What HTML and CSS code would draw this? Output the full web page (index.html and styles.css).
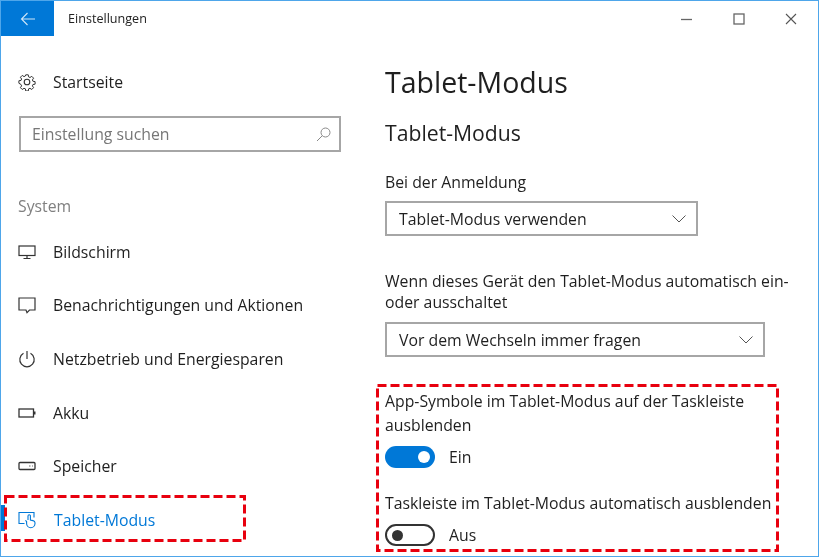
FILE: index.html
```html
<!DOCTYPE html>
<html lang="de">
  <head>
    <meta charset="UTF-8" />
    <title>Einstellungen</title>
    <link rel="stylesheet" href="styles.css">
  </head>
  <body>
    <div class="window">
      <header class="titlebar">
        <div class="back-btn">
          <svg width="16" height="14" viewBox="0 0 16 14"><path d="M15 7H1.500M7.500 1 1.500 7l6 6" fill="none" stroke="#cfe6f8" stroke-width="1.100"/></svg>
        </div>
        <div class="title">Einstellungen</div>
        <div class="win-controls">
          <svg width="12" height="12" viewBox="0 0 12 12"><path d="M0 6.500h11" stroke="#666" stroke-width="1.300"/></svg>
          <svg width="12" height="12" viewBox="0 0 12 12"><rect x="1" y="1" width="10" height="10" fill="none" stroke="#666" stroke-width="1.300"/></svg>
          <svg width="12" height="12" viewBox="0 0 12 12"><path d="M1 1l10 10M11 1 1 11" stroke="#555" stroke-width="1.100"/></svg>
        </div>
      </header>

      <div class="content">
        <aside class="sidebar">
          <div class="nav-item home">
            <svg class="nav-icon" width="18" height="18" viewBox="0 0 18 18"><g fill="none" stroke="#333" stroke-width="1.100"><circle cx="9" cy="9" r="2.800"/><path d="M7.600 1h2.800l.4 2.300 1.500.7 2-1.300 2 2-1.300 2 .6 1.500 2.400.4v2.800l-2.400.4-.6 1.500 1.300 2-2 2-2-1.300-1.500.6-.4 2.400H7.600l-.4-2.400-1.500-.6-2 1.300-2-2 1.300-2-.6-1.500L0 10.400V7.600l2.400-.4.600-1.500-1.300-2 2-2 2 1.300 1.500-.7z" transform="translate(.9 .9) scale(.9)"/></g></svg>
            <span>Startseite</span>
          </div>
          <div class="search-box">
            <span>Einstellung suchen</span>
            <svg width="15" height="15" viewBox="0 0 15 15"><g fill="none" stroke="#888" stroke-width="1"><circle cx="9.500" cy="5.500" r="4.500"/><path d="M6.300 8.700 1 14"/></g></svg>
          </div>
          <div class="section-label">System</div>
          <nav class="nav-list">
            <div class="nav-item">
              <svg class="nav-icon" width="18" height="16" viewBox="0 0 18 16"><g fill="none" stroke="#333" stroke-width="1.200"><rect x="1" y="2" width="16" height="9.500"/><path d="M9 11.500v3M5.500 14.500h7"/></g></svg>
              <span>Bildschirm</span>
            </div>
            <div class="nav-item">
              <svg class="nav-icon" width="18" height="18" viewBox="0 0 18 18"><path d="M1 2h16v12h-5.500L9 16.700 8 14H1z" fill="none" stroke="#333" stroke-width="1.200"/></svg>
              <span>Benachrichtigungen und Aktionen</span>
            </div>
            <div class="nav-item">
              <svg class="nav-icon" width="18" height="18" viewBox="0 0 18 18"><g fill="none" stroke="#333" stroke-width="1.200"><path d="M5.500 3.300a7.200 7.200 0 1 0 7 0"/><path d="M9 1v8"/></g></svg>
              <span>Netzbetrieb und Energiesparen</span>
            </div>
            <div class="nav-item">
              <svg class="nav-icon" width="18" height="12" viewBox="0 0 18 12"><g fill="none" stroke="#333" stroke-width="1.300"><rect x="1" y="2" width="14.500" height="8"/></g><rect x="16" y="4.500" width="1.500" height="3" fill="#333"/></svg>
              <span>Akku</span>
            </div>
            <div class="nav-item">
              <svg class="nav-icon" width="18" height="12" viewBox="0 0 18 12"><rect x="1" y="2.500" width="16" height="7" rx="1" fill="none" stroke="#333" stroke-width="1.300"/><path d="M11 6h1.500M14 6h1" stroke="#666" stroke-width="1"/></svg>
              <span>Speicher</span>
            </div>
            <div class="nav-item active">
              <svg class="nav-icon" width="18" height="18" viewBox="0 0 18 18"><g fill="none" stroke="#0078d7" stroke-width="1.100"><path d="M6.500 12.500H1V1.500h15v5"/><path d="M10 9V5a1.200 1.200 0 0 1 2.400 0v4l2.600.6c1.200.3 2 1 2 2.200v.7a4.200 4.200 0 0 1-8.400 0v-2l-1.200-1.200"/></g></svg>
              <span>Tablet-Modus</span>
            </div>
          </nav>
        </aside>

        <main class="main">
          <h1>Tablet-Modus</h1>
          <h2>Tablet-Modus</h2>
          <p class="field-label first">Bei der Anmeldung</p>
          <div class="select select-short">
            <span>Tablet-Modus verwenden</span>
            <svg width="14" height="8" viewBox="0 0 14 8"><path d="M.5.500 7 7 13.500.500" fill="none" stroke="#555" stroke-width="1"/></svg>
          </div>
          <p class="field-label second">Wenn dieses Gerät den Tablet-Modus automatisch ein-<br>oder ausschaltet</p>
          <div class="select select-long">
            <span>Vor dem Wechseln immer fragen</span>
            <svg width="14" height="8" viewBox="0 0 14 8"><path d="M.5.500 7 7 13.500.500" fill="none" stroke="#555" stroke-width="1"/></svg>
          </div>
          <p class="field-label third">App-Symbole im Tablet-Modus auf der Taskleiste<br>ausblenden</p>
          <div class="toggle-row">
            <div class="toggle on"><i></i></div>
            <span>Ein</span>
          </div>
          <p class="field-label fourth">Taskleiste im Tablet-Modus automatisch ausblenden</p>
          <div class="toggle-row">
            <div class="toggle off"><i></i></div>
            <span>Aus</span>
          </div>
        </main>
      </div>

      <svg class="mark mark-nav" width="242" height="47"><rect x="1.500" y="1.500" width="239" height="44" /></svg>
      <svg class="mark mark-toggles" width="403" height="168"><rect x="1.500" y="1.500" width="400" height="165" /></svg>
    </div>
  </body>
</html>
```

FILE: styles.css
```css
* {
  box-sizing: border-box;
}
html,
body {
  margin: 0;
  padding: 0;
  height: 100%;
  overflow: hidden;
}
body {
  font-family: "Open Sans", "Noto Sans", sans-serif;
  color: #1f1f1f;
  background: #fff;
}
.window {
  position: relative;
  width: 819px;
  height: 557px;
  border: 1px solid #4ea6ea;
  overflow: hidden;
  filter: blur(0.35px);
}
.titlebar {
  display: flex;
  align-items: center;
  height: 35px;
}
.back-btn {
  width: 53px;
  height: 35px;
  background: #0078d7;
  display: flex;
  align-items: center;
  justify-content: center;
}
.title {
  margin-left: 14px;
  font-size: 12.6px;
  color: #222;
}
.win-controls {
  margin-left: auto;
  display: flex;
  gap: 40px;
  padding-right: 21px;
}
.content {
  display: flex;
}
.sidebar {
  width: 384px;
  padding: 0 0 0 17px;
}
.nav-item {
  display: flex;
  align-items: center;
  height: 53.6px;
  font-size: 15.8px;
}
.nav-icon {
  flex: none;
  margin-right: 17px;
}
.home {
  height: 30px;
  margin-top: 31px;
}
.search-box {
  display: flex;
  align-items: center;
  justify-content: space-between;
  width: 322px;
  height: 36px;
  margin: 19px 0 0 1px;
  padding: 0 8px 0 11px;
  border: 2px solid #a6a6a6;
  font-size: 15.8px;
  color: #777;
}
.section-label {
  margin-top: 44px;
  font-size: 15.8px;
  line-height: 20px;
  color: #808080;
}
.nav-list {
  margin-top: 9px;
}
.active {
  color: #0078d7;
  position: relative;
}
.active .nav-icon {
  margin-right: 18px;
}
.active::before {
  content: "";
  position: absolute;
  left: -17px;
  top: 12px;
  width: 4px;
  height: 26px;
  background: #0078d7;
}
.main {
  flex: 1;
}
h1 {
  margin: 27px 0 0;
  font-size: 28.5px;
  line-height: 38px;
  font-weight: 400;
}
h2 {
  margin: 18px 0 0;
  font-size: 21.2px;
  line-height: 28px;
  font-weight: 400;
}
.field-label {
  margin: 0;
  font-size: 15.8px;
  line-height: 24px;
}
.first {
  margin-top: 23px;
}
.second {
  margin-top: 35px;
  line-height: 21px;
}
.third {
  margin-top: 32px;
}
.fourth {
  margin-top: 22px;
}
.select {
  display: flex;
  align-items: center;
  justify-content: space-between;
  height: 35px;
  margin-top: 7px;
  padding: 0 10px 0 12px;
  border: 2px solid #a6a6a6;
  font-size: 15.8px;
}
.select-short {
  width: 313px;
}
.select-long {
  width: 380px;
  margin-top: 9px;
}
.toggle-row {
  display: flex;
  align-items: center;
  gap: 14px;
  height: 24px;
  margin-top: 8px;
  font-size: 15.8px;
}
.toggle {
  display: flex;
  align-items: center;
  width: 50px;
  height: 22px;
  border-radius: 11px;
  padding: 0 5px;
}
.toggle i {
  display: block;
  width: 11px;
  height: 11px;
  border-radius: 50%;
}
.toggle.on {
  background: #0078d7;
  justify-content: flex-end;
}
.toggle.on i {
  background: #fff;
  width: 12px;
  height: 12px;
}
.toggle.off {
  border: 2px solid #333;
}
.toggle.off i {
  background: #333;
}
/* red annotation boxes drawn over the screenshot */
.mark {
  position: absolute;
  pointer-events: none;
}
.mark rect {
  fill: none;
  stroke: #e8000e;
  stroke-width: 3;
  stroke-dasharray: 9 4;
}
.mark-nav {
  left: 3px;
  top: 494px;
}
.mark-toggles {
  left: 375px;
  top: 383px;
}
```
